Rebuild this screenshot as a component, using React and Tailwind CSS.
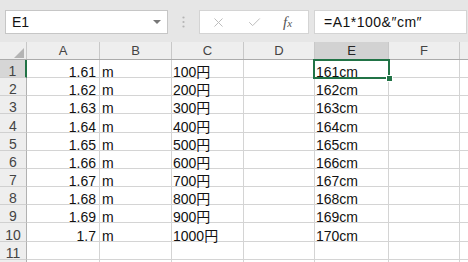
import { X, Check } from "lucide-react";

const font = { fontFamily: '"Liberation Sans", "Noto Sans CJK JP", sans-serif' };

const rowHeights = ["h-[18px]", "h-[18px]", "h-[18px]", "h-[19px]", "h-[18px]", "h-[18px]", "h-[18px]", "h-[18px]", "h-[18px]", "h-[19px]", "h-[18px]", "h-[18px]"];

const data = [
  ["1.61", "m", "100円", "161cm"],
  ["1.62", "m", "200円", "162cm"],
  ["1.63", "m", "300円", "163cm"],
  ["1.64", "m", "400円", "164cm"],
  ["1.65", "m", "500円", "165cm"],
  ["1.66", "m", "600円", "166cm"],
  ["1.67", "m", "700円", "167cm"],
  ["1.68", "m", "800円", "168cm"],
  ["1.69", "m", "900円", "169cm"],
  ["1.7", "m", "1000円", "170cm"],
  ["", "", "", ""],
  ["", "", "", ""],
];

const Cell = ({ w, className = "", children }) => (
  <div className={`${w} shrink-0 h-full flex items-end border-r border-b border-[#d4d4d4] ${className}`}>
    <span className="leading-[10px] whitespace-nowrap">{children}</span>
  </div>
);

const Head = ({ w, label, active }) => (
  <div
    className={`${w} shrink-0 h-full flex items-center justify-center border-r border-[#c8c8c8] text-[13px] ${
      active ? "bg-[#d2d2d2] text-[#262626]" : "text-[#444]"
    }`}
  >
    {label}
  </div>
);

export default function App() {
  return (
    <div className="w-[468px] h-[262px] overflow-hidden bg-white text-[#111]" style={font}>
      {/* formula bar */}
      <div className="h-[42px] bg-[#e6e6e6] flex items-start pt-[10px] pl-[5px]">
        <div className="w-[163px] h-[24px] bg-white border border-[#c6c6c6] flex items-center pl-[6px] pr-[6px] text-[14px]">
          <span className="flex-1">E1</span>
          <svg width="8" height="5" viewBox="0 0 8 5">
            <polygon points="0,0 8,0 4,4" fill="#777" />
          </svg>
        </div>
        <div className="w-[31px] h-[24px] flex items-center justify-center">
          <svg width="3" height="12" viewBox="0 0 3 12">
            <circle cx="1.5" cy="1.5" r="1.1" fill="#b4b4b4" />
            <circle cx="1.5" cy="6" r="1.1" fill="#b4b4b4" />
            <circle cx="1.5" cy="10.5" r="1.1" fill="#b4b4b4" />
          </svg>
        </div>
        <div className="w-[110px] h-[24px] bg-white border border-[#d4d4d4] flex items-center">
          <X size={15} strokeWidth={1.6} className="ml-[11px] text-[#bdbdbd]" />
          <Check size={15} strokeWidth={1.6} className="ml-[21px] text-[#bdbdbd]" />
          <span className="ml-[21px] italic text-[15px] text-[#555]" style={{ fontFamily: '"Liberation Serif", serif' }}>
            f<span className="text-[11px]">x</span>
          </span>
        </div>
        <div className="ml-[5px] mr-[1px] flex-1 h-[24px] bg-white border border-[#d4d4d4] flex items-center pl-[9px] text-[14px] tracking-[0.5px]">
          =A1*100&″cm″
        </div>
      </div>

      {/* column headers */}
      <div className="h-[18px] flex bg-[#eeeeee] border-b border-[#ababab]">
        <div className="w-[27px] shrink-0 h-full border-r border-[#c8c8c8] flex items-end justify-end pr-[2px] pb-[1px]">
          <svg width="10" height="10" viewBox="0 0 10 10">
            <polygon points="10,0 10,10 0,10" fill="#b4b4b4" />
          </svg>
        </div>
        <Head w="w-[73px]" label="A" />
        <Head w="w-[72px]" label="B" />
        <Head w="w-[72px]" label="C" />
        <Head w="w-[71px]" label="D" />
        <Head w="w-[74px]" label="E" active />
        <Head w="w-[71px]" label="F" />
        <div className="flex-1" />
      </div>

      {/* rows */}
      {data.map((r, i) => (
        <div key={i} className={`${rowHeights[i]} flex text-[14px]`}>
          <div
            className={`w-[27px] shrink-0 h-full flex items-end justify-center border-b border-[#d0d0d0] text-[#444] ${
              i === 0 ? "bg-[#d6d6d6] border-r-2 border-r-[#217346]" : "bg-[#eeeeee] border-r border-r-[#b1b1b1]"
            }`}
          >
            <span className="leading-[10px] pb-[1px]">{i < 11 ? i + 1 : ""}</span>
          </div>
          <Cell w="w-[73px]" className="justify-end pr-[3px]">{r[0]}</Cell>
          <Cell w="w-[72px]" className="pl-[2px]">{r[1]}</Cell>
          <Cell w="w-[72px]" className="pl-[1px]">{r[2]}</Cell>
          <Cell w="w-[71px]" />
          <div className="w-[74px] shrink-0 h-full relative flex items-end border-r border-b border-[#d4d4d4] pl-[1px]">
            <span className="leading-[10px] whitespace-nowrap">{r[3]}</span>
            {i === 0 && (
              <div className="absolute top-[-1px] left-[-2px] right-[-2px] bottom-[-2px] border-2 border-[#217346] z-10">
                <div className="absolute right-[-5px] bottom-[-5px] w-[7px] h-[7px] bg-[#217346] border border-white" />
              </div>
            )}
          </div>
          <Cell w="w-[71px]" />
          <div className="flex-1 h-full border-b border-[#d4d4d4]" />
        </div>
      ))}
    </div>
  );
}
